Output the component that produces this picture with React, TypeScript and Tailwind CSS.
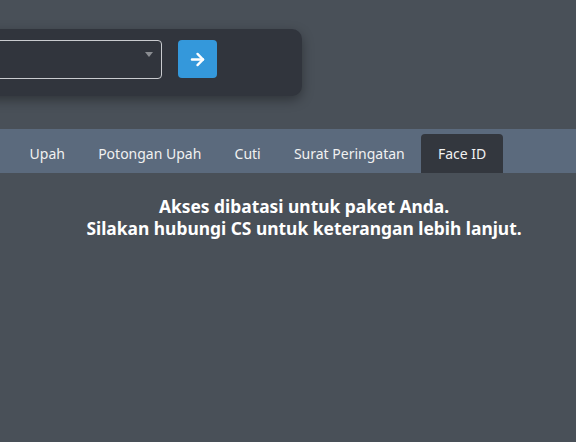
import React from "react";
import { ArrowRight } from "lucide-react";

const tabs = ["Upah", "Potongan Upah", "Cuti", "Surat Peringatan", "Face ID"];

export default function App() {
    return (
        <div
            className="min-h-[442px] w-[576px] overflow-hidden bg-[#495058] text-white"
            style={{ fontFamily: '"Noto Sans", "Open Sans", sans-serif' }}
        >
            <div className="pt-[29px] pb-[33px]">
                <div className="ml-[-30px] flex h-[67px] w-[332px] items-start gap-[16px] rounded-[10px] bg-[#31353d] pt-[11px] pl-[10px] shadow-[0_4px_12px_rgba(0,0,0,0.35)]">
                    <div className="relative h-[39px] w-[182px] rounded-[4px] border border-[#c9cbcf] bg-[#31353d]">
                        <span className="absolute right-[8px] top-[11px] h-0 w-0 border-x-[4px] border-t-[5px] border-x-transparent border-t-[#8a8d92]" />
                    </div>
                    <button className="flex h-[38px] w-[39px] items-center justify-center rounded-[4px] bg-[#3498db]">
                        <ArrowRight size={19} strokeWidth={3} className="text-white" />
                    </button>
                </div>
            </div>

            <div className="flex h-[44px] items-end bg-[#5b6a7d] pl-[13px]">
                {tabs.map((tab) => (
                    <div
                        key={tab}
                        className={
                            tab === "Face ID"
                                ? "flex h-[39px] items-center rounded-t-[4px] bg-[#33373e] px-[16.6px] text-[14px] text-[#f1f1f1]"
                                : "flex h-[39px] items-center px-[16.6px] text-[14px] text-[#f1f1f1]"
                        }
                    >
                        {tab}
                    </div>
                ))}
            </div>

            <div className="pl-[32px] pt-[22px] text-center text-[17.4px] font-bold leading-[22px]">
                <p>Akses dibatasi untuk paket Anda.</p>
                <p>Silakan hubungi CS untuk keterangan lebih lanjut.</p>
            </div>
        </div>
    );
}
